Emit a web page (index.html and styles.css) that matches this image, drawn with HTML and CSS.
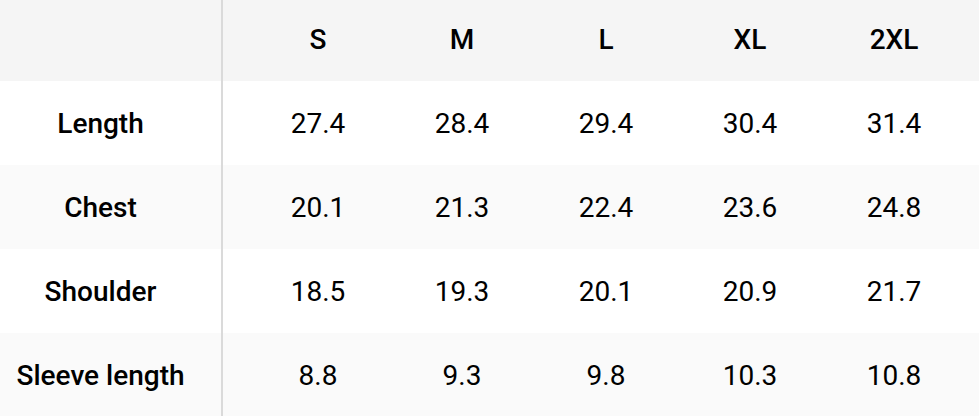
FILE: index.html
```html
<!DOCTYPE html>
<html lang="en">
<head>
<meta charset="utf-8">
<title>Size chart</title>
<link rel="stylesheet" href="styles.css">
</head>
<body>
<div class="chart">
  <div class="row head">
    <div class="label"></div>
    <div class="cell">S</div>
    <div class="cell">M</div>
    <div class="cell">L</div>
    <div class="cell">XL</div>
    <div class="cell">2XL</div>
  </div>
  <div class="row odd">
    <div class="label">Length</div>
    <div class="cell">27.4</div>
    <div class="cell">28.4</div>
    <div class="cell">29.4</div>
    <div class="cell">30.4</div>
    <div class="cell">31.4</div>
  </div>
  <div class="row even">
    <div class="label">Chest</div>
    <div class="cell">20.1</div>
    <div class="cell">21.3</div>
    <div class="cell">22.4</div>
    <div class="cell">23.6</div>
    <div class="cell">24.8</div>
  </div>
  <div class="row odd">
    <div class="label">Shoulder</div>
    <div class="cell">18.5</div>
    <div class="cell">19.3</div>
    <div class="cell">20.1</div>
    <div class="cell">20.9</div>
    <div class="cell">21.7</div>
  </div>
  <div class="row even">
    <div class="label">Sleeve length</div>
    <div class="cell">8.8</div>
    <div class="cell">9.3</div>
    <div class="cell">9.8</div>
    <div class="cell">10.3</div>
    <div class="cell">10.8</div>
  </div>
</div>
</body>
</html>
```

FILE: styles.css
```css
html, body {
  margin: 0;
  padding: 0;
  background: #ffffff;
}

body {
  font-family: Roboto, "Liberation Sans", sans-serif;
  color: #000000;
  font-size: 28px;
}

.chart {
  display: flex;
  flex-direction: column;
  width: 979px;
}

.row {
  display: grid;
  grid-template-columns: 223px repeat(5, 144px) 1fr;
  height: 84px;
  align-items: stretch;
}

.row.head {
  height: 81px;
  background: #f5f5f5;
  font-weight: 500;
}

.row.head .cell {
  padding-bottom: 3px;
}

.row.odd {
  background: #ffffff;
}

.row.even {
  background: #fafafa;
}

.label {
  box-sizing: border-box;
  border-right: 2px solid #dadada;
  padding-right: 20px;
  display: flex;
  align-items: center;
  justify-content: center;
  font-weight: 500;
  white-space: nowrap;
}

.cell {
  box-sizing: border-box;
  padding-left: 47px;
  padding-right: 1px;
  display: flex;
  align-items: center;
  justify-content: center;
  white-space: nowrap;
}
```
